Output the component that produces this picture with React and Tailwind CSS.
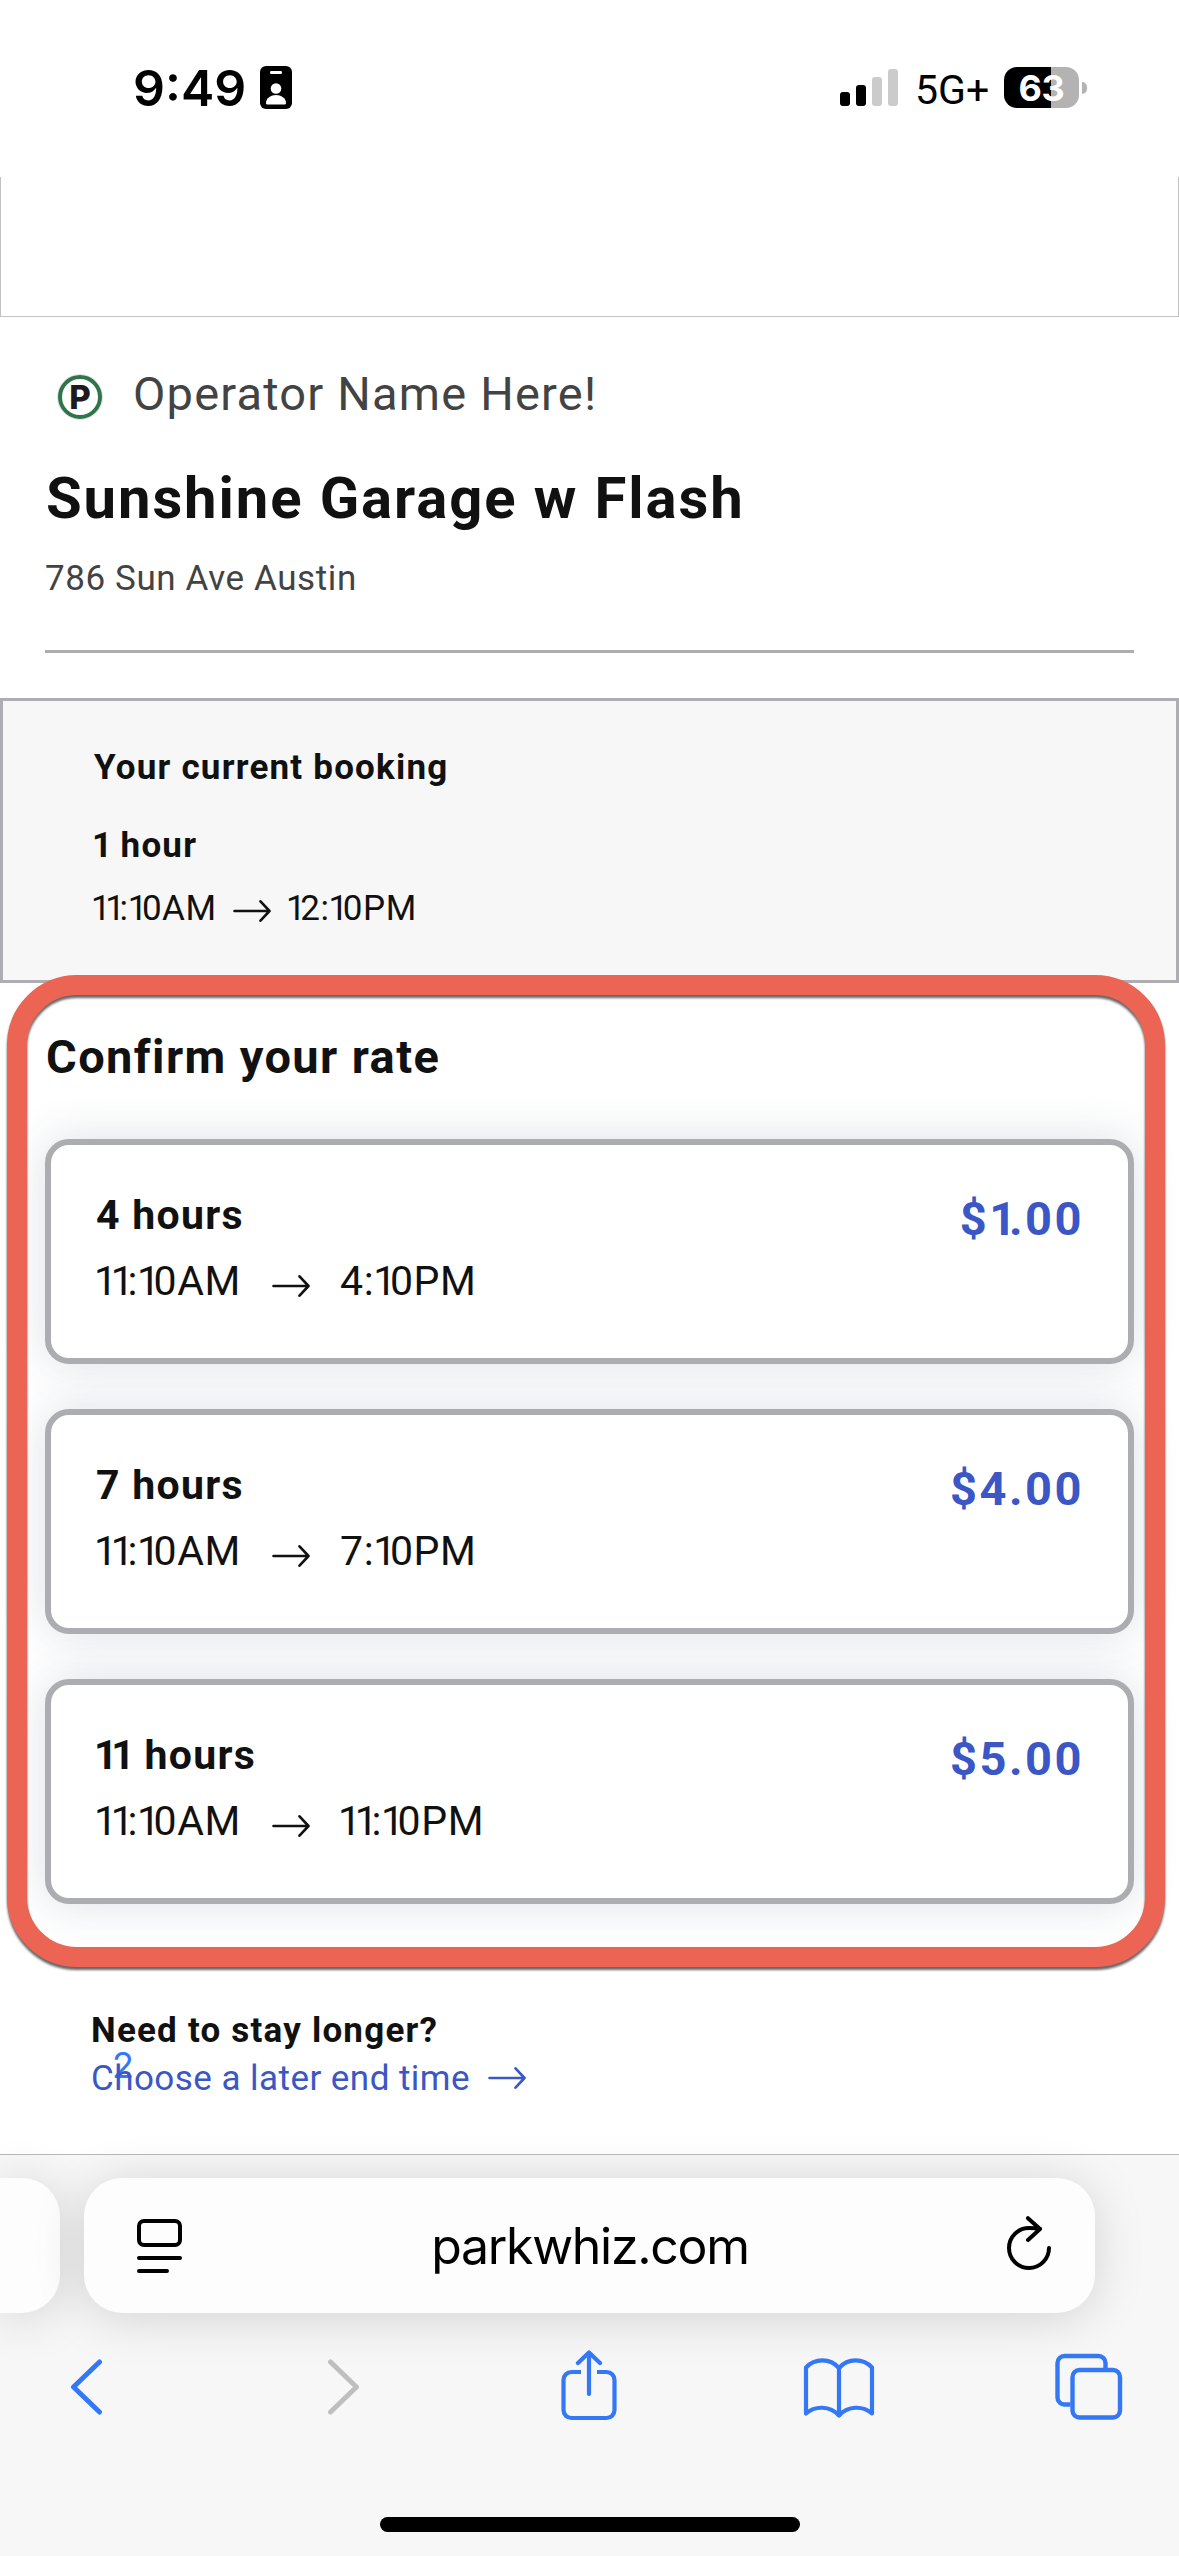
import React from "react";

// Sets figures proportionally: the narrow "1" and the colon are drawn in closer to their neighbours.
function Figures({ children }) {
  return children.split(/(1+(?! )|:|1(?= ))/).filter(Boolean).map((part, i, all) => {
    const beforeSpace = (all[i + 1] || "")[0] === " ";
    if (part === ":") return <span key={i} className="tracking-[-0.01em]">{part}</span>;
    if (part[0] === "1" && beforeSpace) return <span key={i} className="tracking-[-0.04em]">{part}</span>;
    if (part[0] === "1") return <span key={i} className="tracking-[-0.155em]">{part}</span>;
    return <React.Fragment key={i}>{part}</React.Fragment>;
  });
}

function Arrow({ className }) {
  return (
    <svg viewBox="0 0 38 24" className={"h-6 w-[38px] shrink-0 " + className} fill="none" stroke="currentColor" strokeWidth="2.6" strokeLinecap="round" strokeLinejoin="round">
      <path d="M1.5 12H36M27.5 2.3L36.5 12l-9 9.7" />
    </svg>
  );
}

const rates = [
  { length: "4 hours", from: "11:10AM", to: "4:10PM", price: "$1.00" },
  { length: "7 hours", from: "11:10AM", to: "7:10PM", price: "$4.00" },
  { length: "11 hours", from: "11:10AM", to: "11:10PM", price: "$5.00" },
];

function RateCard({ rate }) {
  const one = rate.length[0] === "1";
  return (
    <div className="flex h-[225px] justify-between rounded-[24px] border-6 border-[#abadb1] bg-white pt-[50px] pr-11 pl-[45px] shadow-[0_0_45px_rgba(45,70,110,0.17)]">
      <div>
        <div className={"text-[41px] leading-none font-bold tracking-[1.3px] " + (one ? "-ml-0.5" : "")}>
          <Figures>{rate.length}</Figures>
        </div>
        <div className="mt-[25px] flex text-[41px] leading-none tracking-[0.015em]">
          <span className="-ml-0.5 w-[178px]"><Figures>{rate.from}</Figures></span>
          <Arrow className="mt-[13px]" />
          <span className={rate.to[0] === "1" ? "ml-7" : "ml-[30px]"}><Figures>{rate.to}</Figures></span>
        </div>
      </div>
      <div className="text-[47px] leading-none font-bold tracking-[2.5px] text-[#3a57c5]">
        <Figures>{rate.price}</Figures>
      </div>
    </div>
  );
}

function StatusBar() {
  return (
    <header className="flex h-[177px] shrink-0 items-start justify-between pt-[63px] pr-[92px] pl-[133px] font-['Inter',sans-serif] text-black">
      <div className="flex">
        <span className="w-[127px] text-[50px] leading-none font-[560]">9:49</span>
        <svg viewBox="0 0 32 43" className="mt-[3px] h-[43px] w-8">
          <rect width="32" height="43" rx="6" fill="#000" />
          <rect x="10" y="5" width="12" height="3" rx="1.2" fill="#fff" />
          <circle cx="16" cy="22.5" r="5.3" fill="#fff" />
          <path d="M6 37.2C6 32 11 29 16 29s10 3 10 8.2c0 .8-.5 1.2-1.2 1.2H7.200C6.500 38.400 6 38 6 37.200z" fill="#fff" />
        </svg>
      </div>
      <div className="flex">
        <div className="mt-1.5 flex h-[37px] items-end gap-1.5">
          <i className="h-3.5 w-2.5 rounded-[3px] bg-black" />
          <i className="h-[21px] w-2.5 rounded-[3px] bg-black" />
          <i className="h-[29px] w-2.5 rounded-[3px] bg-[#cbcbcb]" />
          <i className="h-[37px] w-2.5 rounded-[3px] bg-[#cbcbcb]" />
        </div>
        <span className="mt-[7px] ml-[17px] w-[89px] font-['Roboto',sans-serif] text-[41px] leading-none font-[450]">5G+</span>
        <div className="mt-1 flex h-[41px] w-[75px] items-center justify-center rounded-[13px] bg-linear-to-r from-black from-[62.7%] to-[#b3b3b3] to-[62.7%] text-[36px] leading-none font-bold tracking-[-0.3px] text-white">
          63
        </div>
        <i className="mt-[19px] ml-[3px] h-3 w-[5px] rounded-r-full bg-[#b3b3b3]" />
      </div>
    </header>
  );
}

function BrowserBar() {
  return (
    <footer className="relative mt-auto h-[402px] shrink-0 border-t border-[#b8b8b8] bg-[#f7f7f7] pt-[23px] font-['Inter',sans-serif] text-black">
      <div className="flex gap-6">
        <div className="h-[135px] w-[60px] rounded-r-[38px] bg-[#fdfdfd] shadow-[0_5px_50px_rgba(0,0,0,0.15)]" />
        <div className="flex h-[135px] w-[1011px] justify-between rounded-[38px] bg-[#fdfdfd] pr-[43px] pl-[53px] shadow-[0_5px_50px_rgba(0,0,0,0.15)]">
          <svg viewBox="0 0 45 56" className="mt-[41px] h-14 w-[45px]" fill="none" stroke="#000" strokeWidth="4" strokeLinecap="round">
            <rect x="2" y="2" width="41" height="24" rx="5" />
            <path d="M2 39h41M2 52h28" />
          </svg>
          <span className="mt-[43px] -ml-2 text-[50px] leading-none tracking-[-1.3px]">parkwhiz.com</span>
          <svg viewBox="0 0 46 56" className="mt-[37px] h-14 w-[46px]" fill="none" stroke="#000" strokeWidth="4" strokeLinecap="round" strokeLinejoin="round">
            <path d="M43 33A20 20 0 1 1 23 13Q28 13 34 13.800M22 3.200L34 14L22 25" />
          </svg>
        </div>
      </div>
      <nav className="mt-[37px] flex h-[74px] items-center pl-[69px] text-[#3478f6]">
        <svg viewBox="0 0 36 56" className="h-14 w-9" fill="none" stroke="currentColor" strokeWidth="5" strokeLinecap="round" strokeLinejoin="round">
          <path d="M30.500 3L4.500 28l26 25" />
        </svg>
        <svg viewBox="0 0 36 56" className="ml-[220px] h-14 w-9 text-[#bfbfbf]" fill="none" stroke="currentColor" strokeWidth="5" strokeLinecap="round" strokeLinejoin="round">
          <path d="M5.500 3l26 25l-26 25" />
        </svg>
        <svg viewBox="0 0 58 74" className="ml-[199px] h-[74px] w-[58px]" fill="none" stroke="currentColor" strokeWidth="4.2" strokeLinejoin="round">
          <path d="M21 22H11.500a8 8 0 0 0-8 8v30a8 8 0 0 0 8 8h35a8 8 0 0 0 8-8V30a8 8 0 0 0-8-8H37" />
          <path d="M29 44V3M18 13L29 2.500l11 10.500" strokeLinecap="round" />
        </svg>
        <svg viewBox="0 0 72 74" className="ml-[185px] h-[74px] w-[72px]" fill="none" stroke="currentColor" strokeWidth="4.2" strokeLinecap="round" strokeLinejoin="round">
          <path d="M3 17.500C12 8 27 8 36 18C45 8 60 8 69 17.500V63.500C60 55.500 45 55.500 36 65.500C27 55.500 12 55.500 3 63.500zM36 18V65" />
        </svg>
        <svg viewBox="0 0 70 74" className="ml-[178px] h-[74px] w-[70px]" fill="none" stroke="currentColor" strokeWidth="4.4">
          <path d="M17.500 54.500H11.500a7 7 0 0 1-7-7V13a7 7 0 0 1 7-7H45.500a7 7 0 0 1 7 7V20" />
          <rect x="19.500" y="20" width="47.500" height="47.500" rx="7" />
        </svg>
      </nav>
      <div className="mx-auto mt-[93px] h-[15px] w-[420px] rounded-full bg-black" />
    </footer>
  );
}

export default function App() {
  return (
    <div className="relative flex h-[2556px] w-[1179px] flex-col overflow-hidden bg-white font-['Roboto',sans-serif] text-[#111111]">
      <StatusBar />
      <div className="h-[140px] shrink-0 border border-t-0 border-[#c2c2c2]" />

      <section className="px-[45px] pt-[53px] text-[#434343]">
        <div className="flex">
          <div className="mt-1 ml-3 flex size-[46px] items-center justify-center rounded-full border border-[#dfe3e0]">
            <div className="flex size-11 shrink-0 items-center justify-center rounded-full border-[4.5px] border-[#2f7549] font-['Inter',sans-serif] text-[33px] leading-none font-extrabold text-[#1d1b1e]">
              P
            </div>
          </div>
          <div className="ml-[30px] text-[47px] leading-none tracking-[1.2px]">Operator Name Here!</div>
        </div>
        <h1 className="mt-[49px] ml-px text-[58px] leading-none font-bold tracking-[1.9px] text-[#111111]">Sunshine Garage w Flash</h1>
        <p className="mt-[34px] text-[35px] leading-none tracking-[0.6px]">786 Sun Ave Austin</p>
        <div className="mt-[54px] h-[3px] bg-[#acacb2]" />
      </section>

      <section className="mt-[45px] h-[285px] shrink-0 border-3 border-[#adadb3] bg-[#f7f7f7] pt-[49px] pl-[91px] text-[35px] leading-none">
        <h2 className="font-bold tracking-[1.2px]">Your current booking</h2>
        <div className="mt-[43px] -ml-0.5 font-bold tracking-[1.2px]"><Figures>1 hour</Figures></div>
        <div className="mt-7 -ml-[3px] flex tracking-[0.015em]">
          <span className="w-[142px]"><Figures>11:10AM</Figures></span>
          <Arrow className="mt-2" />
          <span className="ml-[15px]"><Figures>12:10PM</Figures></span>
        </div>
      </section>

      <section className="px-[45px] pt-[50px]">
        <h2 className="ml-px text-[47px] leading-none font-bold tracking-[1.4px]">Confirm your rate</h2>
        <div className="mt-[59px] flex flex-col gap-[45px]">
          {rates.map((rate) => (
            <RateCard key={rate.length} rate={rate} />
          ))}
        </div>
      </section>

      <section className="pt-[109px] pl-[91px] text-[35px] leading-none">
        <h3 className="font-bold tracking-[1.2px]">Need to stay longer?</h3>
        <div className="relative mt-[13px] flex text-[#3a57c5]">
          <span className="absolute top-[-14px] left-[21px] font-['Inter',sans-serif] text-[36px] leading-none text-[#3478f6]">2</span>
          <span className="relative w-[397px] tracking-[0.45px]">Choose a later end time</span>
          <Arrow className="mt-[5px]" />
        </div>
      </section>

      <div className="pointer-events-none absolute top-[975px] left-[7px] h-[992px] w-[1158px] rounded-[70px] border-20 border-[#ec6454] drop-shadow-[0_3px_1px_rgba(0,0,0,0.6)]" />

      <BrowserBar />
    </div>
  );
}
